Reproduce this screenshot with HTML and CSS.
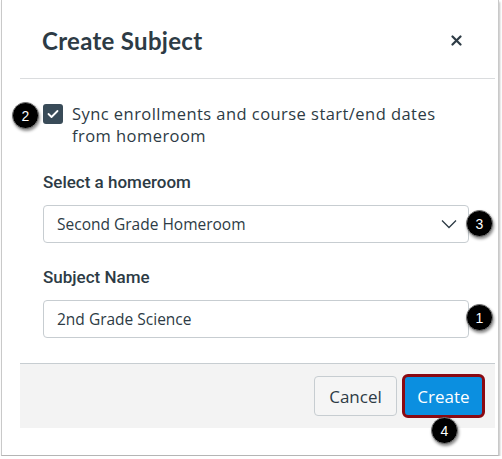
FILE: index.html
```html
<!DOCTYPE html>
<html>
<head>
<meta charset="utf-8">
<link rel="stylesheet" href="styles.css">
</head>
<body>
<div class="frame">
  <div class="modal">
    <div class="header">
      <h1 class="title">Create Subject</h1>
      <span class="close">
        <svg width="11" height="11" viewBox="0 0 11 11"><path d="M1.5 1.5 L9.5 9.5 M9.5 1.5 L1.5 9.5" stroke="#2d3b45" stroke-width="2.2" stroke-linecap="round"/></svg>
      </span>
    </div>
    <div class="body">
      <label class="check-row">
        <span class="checkbox">
          <svg width="12" height="10" viewBox="0 0 12 10"><path d="M1.5 5 L4.5 8 L10.5 2" fill="none" stroke="#fff" stroke-width="1.8" stroke-linecap="round" stroke-linejoin="round"/></svg>
        </span>
        <span class="check-text">Sync enrollments and course start/end dates from homeroom</span>
      </label>
      <div class="field">
        <div class="label">Select a homeroom</div>
        <div class="input select">
          <span>Second Grade Homeroom</span>
          <svg class="chev" width="16" height="10" viewBox="0 0 16 10"><path d="M1 1.5 L8 8.5 L15 1.5" fill="none" stroke="#2d3b45" stroke-width="1.3"/></svg>
        </div>
      </div>
      <div class="field second">
        <div class="label">Subject Name</div>
        <div class="input">2nd Grade Science</div>
      </div>
    </div>
    <div class="footer">
      <button class="btn cancel">Cancel</button>
      <button class="btn create">Create</button>
    </div>
  </div>
  <span class="badge b2">2</span>
  <span class="badge b3">3</span>
  <span class="badge b1">1</span>
  <span class="badge b4">4</span>
</div>
</body>
</html>
```

FILE: styles.css
```css
* { box-sizing: border-box; }
html, body { margin: 0; padding: 0; background: #fff; }
body {
  font-family: "Open Sans", Lato, sans-serif;
  color: #2d3b45;
}
.frame {
  position: relative;
  margin-left: 1px;
  width: 498px;
  height: 456px;
  border-left: 1px solid #c9c9c9;
  border-right: 1px solid #c9c9c9;
  border-bottom: 1px solid #b5b5b5;
  box-shadow: 1px 2px 2px rgba(0,0,0,0.25);
  padding-left: 18px;
  padding-right: 2px;
}
.modal {
  background: #fff;
  width: 475px;
}
.header {
  height: 79px;
  border-bottom: 1px solid #dadcde;
  display: flex;
  align-items: center;
  justify-content: space-between;
  padding: 0 33px 0 22px;
}
.title {
  margin: 0;
  font-family: Lato, sans-serif;
  font-weight: 700;
  font-size: 24px;
  letter-spacing: 0.3px;
  padding-top: 2px;
}
.close { display: flex; padding-top: 2px; }
.body {
  padding: 24px 26px 25px 23px;
}
.check-row {
  display: flex;
  align-items: flex-start;
  gap: 9px;
}
.checkbox {
  flex: none;
  width: 20px;
  height: 20px;
  background: #394b58;
  border-radius: 3px;
  display: flex;
  align-items: center;
  justify-content: center;
  margin-top: 1px;
}
.check-text {
  font-size: 16.5px;
  letter-spacing: 0.45px;
  line-height: 22px;
  width: 372px;
}
.field { margin-top: 24px; }
.field.second { margin-top: 23px; }
.label {
  font-family: Roboto, "Open Sans", sans-serif;
  font-size: 17px;
  font-weight: 500;
  line-height: 22px;
  margin-bottom: 12px;
}
.input {
  height: 38px;
  border: 1px solid #c7cdd1;
  border-radius: 4px;
  padding: 0 13px;
  display: flex;
  align-items: center;
  justify-content: space-between;
  font-size: 15.5px;
}
.chev { margin-right: -2px; }
.footer {
  background: #f3f3f3;
  border-top: 1px solid #c7cdd1;
  height: 65px;
  display: flex;
  align-items: center;
  justify-content: flex-end;
  gap: 5px;
  padding-right: 10px;
}
.btn {
  font-family: "Open Sans", Lato, sans-serif;
  font-size: 17px;
  border-radius: 4px;
  cursor: pointer;
}
.cancel {
  width: 83px;
  height: 40px;
  background: #f5f5f5;
  border: 1px solid #c7cdd1;
  color: #2d3b45;
}
.create {
  width: 83px;
  height: 44px;
  background: #0b8fe0;
  color: #fff;
  border: 3px solid #8b0a12;
  border-radius: 6px;
}
.badge {
  position: absolute;
  width: 27px;
  height: 27px;
  border-radius: 50%;
  background: #000;
  color: #fff;
  font-family: "Liberation Sans", Arial, sans-serif;
  font-size: 14px;
  display: flex;
  align-items: center;
  justify-content: center;
  border: 1px solid #777;
  box-shadow: 1px 2px 3px rgba(0,0,0,0.45);
}
.b2 { left: 10px; top: 102px; }
.b3 { left: 464px; top: 210px; }
.b1 { left: 464px; top: 304px; }
.b4 { left: 429px; top: 417px; }
```
